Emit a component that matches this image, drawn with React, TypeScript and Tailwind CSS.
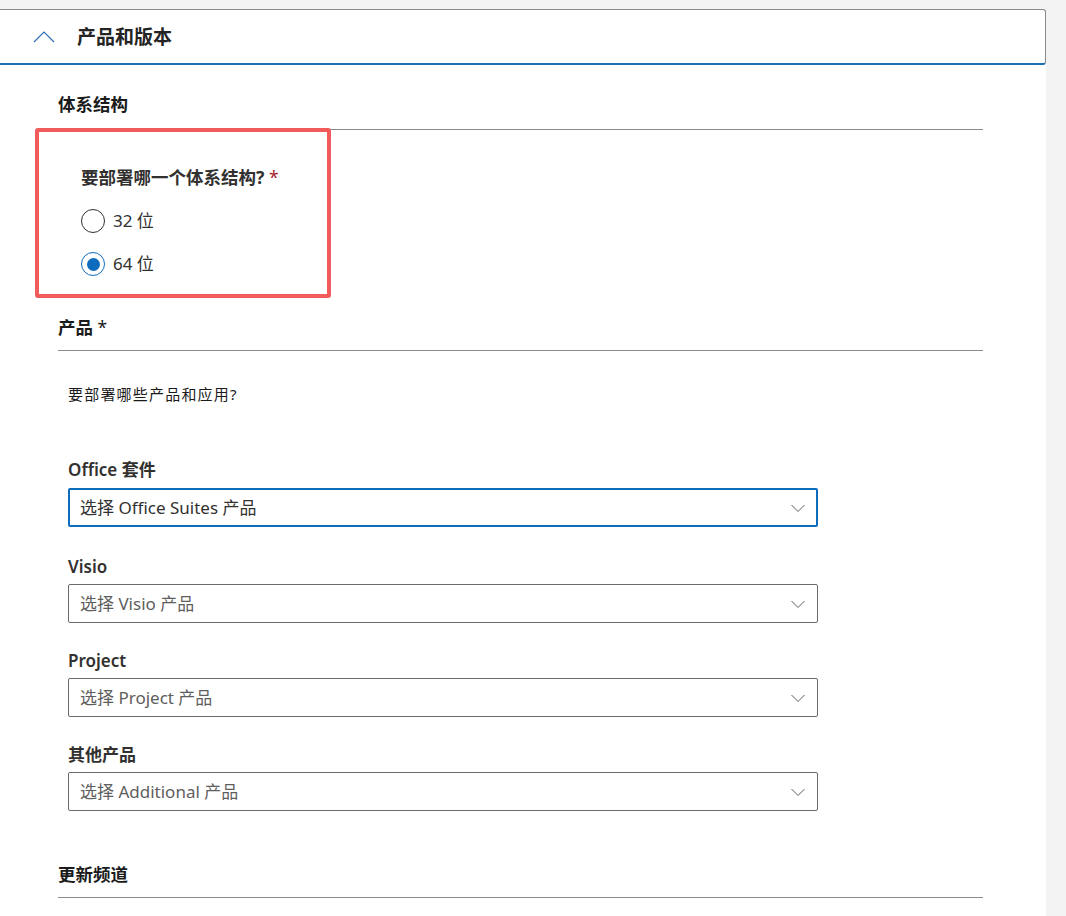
import React from 'react';

const font = {
  fontFamily: '"Segoe UI", "Noto Sans", "Noto Sans CJK SC", sans-serif',
};

function ChevronDown() {
  return (
    <svg width="16" height="10" viewBox="0 0 16 10" fill="none">
      <path d="M1.5 2 L8 8.5 L14.5 2" stroke="#605e5c" strokeWidth="1" />
    </svg>
  );
}

function ChevronUp() {
  return (
    <svg width="22" height="12" viewBox="0 0 22 12" fill="none">
      <path d="M1 11 L11 1 L21 11" stroke="#2f6db5" strokeWidth="1.2" />
    </svg>
  );
}

interface SelectProps {
  label: string;
  placeholder: string;
  focused?: boolean;
  className?: string;
}

function SelectField({ label, placeholder, focused, className }: SelectProps) {
  return (
    <div className={className}>
      <div className="h-6 text-[17px] leading-6 font-semibold text-[#323130]">{label}</div>
      <div
        className={
          focused
            ? 'mt-[6px] flex h-[39px] w-[750px] items-center justify-between rounded-[2px] border-2 border-[#0f6cbd] pr-[10px] pl-[10px]'
            : 'mt-[5px] flex h-[39px] w-[750px] items-center justify-between rounded-[2px] border border-[#6b6b6b] pr-[11px] pl-[11px]'
        }
      >
        <span className={focused ? 'text-[17px] text-[#323130]' : 'text-[17px] text-[#605e5c]'}>
          {placeholder}
        </span>
        <ChevronDown />
      </div>
    </div>
  );
}

function Radio({ label, checked }: { label: string; checked?: boolean }) {
  return (
    <div className="flex h-6 items-center gap-2">
      <span
        className={
          checked
            ? 'flex h-6 w-6 items-center justify-center rounded-full border border-[#0f6cbd]'
            : 'flex h-6 w-6 items-center justify-center rounded-full border border-[#323130]'
        }
      >
        {checked && <span className="h-[13px] w-[13px] rounded-full bg-[#0f6cbd]" />}
      </span>
      <span className="text-[17px] text-[#323130]">{label}</span>
    </div>
  );
}

export default function App() {
  return (
    <div className="min-h-[916px] bg-[#f3f3f3] pt-[9px]" style={font}>
      <div className="min-h-[907px] w-[1046px] bg-white">
        <div className="flex h-[56px] items-center rounded-tr-[3px] rounded-br-[3px] border-t border-r border-b-2 border-t-[#8a8a8a] border-r-[#8a8a8a] border-b-[#1a6fb0] pt-[1px] pl-[33px]">
          <ChevronUp />
          <span className="ml-[22px] text-[19px] font-semibold text-[#242424]">产品和版本</span>
        </div>

        <div className="pt-[27px] pl-[58px]">
          <h3 className="h-6 text-[17.5px] leading-6 font-bold text-[#1b1b1b]">体系结构</h3>
          <div className="mt-[13px] h-px w-[925px] bg-[#8a8a8a]" />

          <div className="relative pt-[35px] pl-[23px]">
            <div className="pointer-events-none absolute top-[-2px] left-[-23px] h-[170px] w-[296px] rounded-[3px] border-4 border-[#f25b5b]" />
            <div className="h-6 text-[17.5px] leading-6 font-bold text-[#323130]">
              要部署哪一个体系结构? <span className="font-normal text-[#a4262c]">*</span>
            </div>
            <div className="mt-[20px] flex flex-col gap-[19px]">
              <Radio label="32 位" />
              <Radio label="64 位" checked />
            </div>
          </div>

          <h3 className="mt-[39px] h-6 text-[17.5px] leading-6 font-bold text-[#1b1b1b]">
            产品 <span className="font-normal">*</span>
          </h3>
          <div className="mt-[11px] h-px w-[925px] bg-[#8a8a8a]" />

          <div className="pl-[10px]">
            <p className="mt-[33px] h-5 text-[15px] leading-5 tracking-[1.2px] text-[#1b1b1b]">要部署哪些产品和应用?</p>
            <SelectField className="mt-[54px]" label="Office 套件" placeholder="选择 Office Suites 产品" focused />
            <SelectField className="mt-[28px]" label="Visio" placeholder="选择 Visio 产品" />
            <SelectField className="mt-[26px]" label="Project" placeholder="选择 Project 产品" />
            <SelectField className="mt-[26px]" label="其他产品" placeholder="选择 Additional 产品" />
          </div>

          <h3 className="mt-[51px] h-6 text-[17.5px] leading-6 font-bold text-[#1b1b1b]">更新频道</h3>
          <div className="mt-[11px] h-px w-[925px] bg-[#8a8a8a]" />
        </div>
      </div>
    </div>
  );
}
